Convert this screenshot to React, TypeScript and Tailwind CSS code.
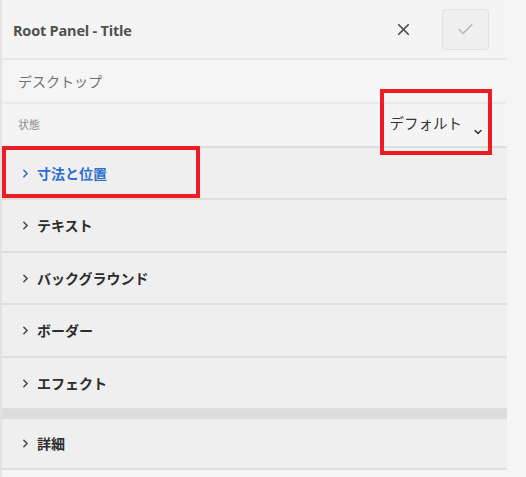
import { X, Check, ChevronRight, ChevronDown } from "lucide-react"

const rows: [string, number][] = [
  ["テキスト", 53],
  ["バックグラウンド", 52],
  ["ボーダー", 53],
  ["エフェクト", 52],
]

function Row({ label, active, h }: { label: string; active?: boolean; h: number }) {
  return (
    <div
      className={`${h === 53 ? "h-[53px]" : h === 51 ? "h-[51px]" : "h-[52px]"} flex items-center pl-[17px] border-b-2 border-[#dedede] bg-[#efefef]`}
    >
      <ChevronRight
        size={13}
        strokeWidth={3}
        className={active ? "text-[#2c6fcf]" : "text-[#4b4b4b]"}
      />
      <span
        className={`ml-[5px] text-[14px] font-bold ${active ? "text-[#2c6fcf]" : "text-[#2c2c2c]"}`}
      >
        {label}
      </span>
    </div>
  )
}

export default function App() {
  return (
    <div
      className="relative w-[526px] h-[477px] bg-[#f5f5f5] flex overflow-hidden"
      style={{ fontFamily: '"Open Sans", "Noto Sans CJK JP", sans-serif' }}
    >
      <div className="w-[507px] border-l-2 border-[#e2e2e2] flex flex-col">
        {/* header */}
        <div className="h-[60px] flex items-center border-b-2 border-[#e6e6e6] bg-[#f4f4f4]">
          <h1 className="ml-[11px] mt-[3px] text-[14.5px] font-bold text-[#505050] tracking-[-0.2px]">Root Panel - Title</h1>
          <button className="ml-auto mr-[29px] text-[#4b4b4b]">
            <X size={19} strokeWidth={2.2} />
          </button>
          <button className="mr-[18px] w-[47px] h-[41px] rounded-[4px] bg-[#efefef] border border-[#e2e2e2] flex items-center justify-center text-[#b5b5b5]">
            <Check size={19} strokeWidth={2} />
          </button>
        </div>

        <div className="h-[44px] flex items-center pl-[16px] bg-[#f5f5f5] border-b-2 border-[#e8e8e8] rounded-b-[4px]">
          <span className="text-[14px] text-[#707070]">デスクトップ</span>
        </div>

        <div className="h-[44px] flex items-center pl-[16px] pr-[23px] bg-[#f4f4f4] border-b-2 border-[#dedede]">
          <span className="text-[11px] text-[#8e8e8e]">状態</span>
          <div className="ml-auto flex items-end gap-[10px] mb-[3px]">
            <span className="text-[14.5px] text-[#333]">デフォルト</span>
            <ChevronDown size={12} strokeWidth={3} className="text-[#333] mb-[-4px]" />
          </div>
        </div>

        <Row label="寸法と位置" active h={52} />
        {rows.map(([r, h]) => (
          <Row key={r} label={r} h={h} />
        ))}
        <div className="h-[9px] bg-[#dcdcdc]" />
        <Row label="詳細" h={51} />
      </div>

      {/* annotation boxes */}
      <div className="absolute left-[380px] top-[89px] w-[112px] h-[66px] border-[4px] border-[#ed1c24]" />
      <div className="absolute left-[2px] top-[146px] w-[198px] h-[52px] border-[4px] border-[#ed1c24]" />
    </div>
  )
}
